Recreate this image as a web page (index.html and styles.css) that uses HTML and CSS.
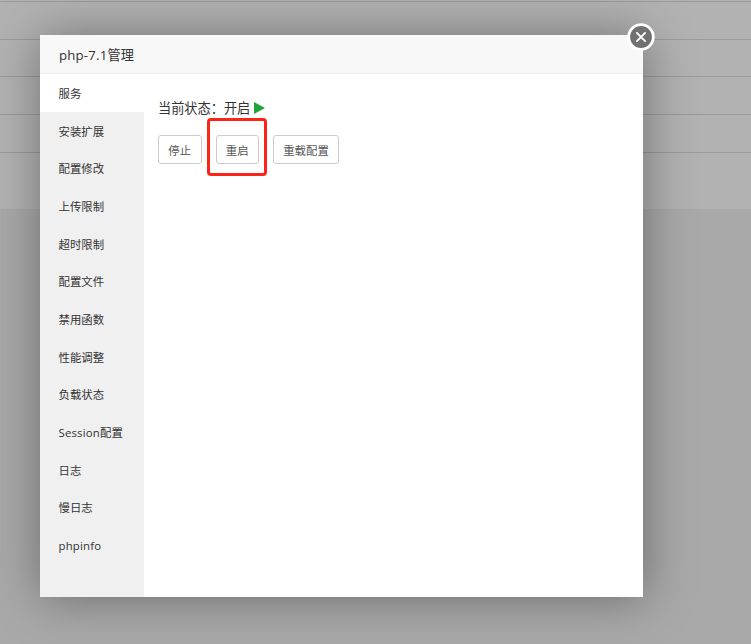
FILE: index.html
```
<!DOCTYPE html>
<html lang="zh-CN">
<head>
<meta charset="utf-8">
<title>php-7.1管理</title>
<link rel="stylesheet" href="styles.css">
</head>
<body>
<div class="backdrop">
  <div class="row row-first"></div>
  <div class="row"></div>
  <div class="row"></div>
  <div class="row"></div>
  <div class="row"></div>
  <div class="row row-last"></div>
</div>
<section class="dialog">
  <header class="dialog-title">php-7.1管理</header>
  <button class="close" aria-label="关闭">
    <svg viewBox="0 0 28 28" width="28" height="28"><circle cx="14" cy="14" r="12.3" fill="#717171" stroke="#fff" stroke-width="2.8"/><path d="M9.9 9.9l8.2 8.2M18.1 9.9l-8.2 8.2" stroke="#fff" stroke-width="1.9" stroke-linecap="round"/></svg>
  </button>
  <div class="dialog-body">
    <nav class="menu">
      <a class="item active">服务</a>
      <a class="item">安装扩展</a>
      <a class="item">配置修改</a>
      <a class="item">上传限制</a>
      <a class="item">超时限制</a>
      <a class="item">配置文件</a>
      <a class="item">禁用函数</a>
      <a class="item">性能调整</a>
      <a class="item">负载状态</a>
      <a class="item latin">Session配置</a>
      <a class="item">日志</a>
      <a class="item">慢日志</a>
      <a class="item latin">phpinfo</a>
    </nav>
    <main class="content">
      <p class="status">当前状态：开启<svg class="play" viewBox="0 0 11 12" width="11" height="12"><path d="M0 0l11 6-11 6z" fill="#20a53a"/></svg></p>
      <div class="actions">
        <button class="btn">停止</button>
        <button class="btn marked">重启</button>
        <button class="btn wide">重载配置</button>
      </div>
    </main>
  </div>
</section>
</body>
</html>
```
FILE: styles.css
```
* { box-sizing: border-box; }
body {
  margin: 0;
  height: 644px;
  overflow: hidden;
  background: #a9a9a9;
  color: #333;
  font-family: "Open Sans", "Noto Sans CJK SC", sans-serif;
  font-size: 11.4px;
}
.backdrop { height: 209px; background: #b2b2b2; }
.row { height: 37.7px; border-bottom: 1px solid #999; }
.row-first { height: 2px; }
.row-last { border-bottom: 0; }
.dialog {
  position: absolute;
  left: 40px;
  top: 35px;
  width: 603px;
  height: 562px;
  display: flex;
  flex-direction: column;
  background: #fff;
  box-shadow: 1px 1px 47px rgba(0, 0, 0, .37);
}
.dialog-title {
  height: 39px;
  padding-left: 19px;
  line-height: 41px;
  font-size: 13.2px;
  letter-spacing: .2px;
  background: #f8f8f8;
  border-bottom: 1px solid #eee;
}
.close {
  position: absolute;
  top: -12.5px;
  right: -12px;
  width: 28px;
  height: 28px;
  padding: 0;
  border: 0;
  background: none;
}
.close svg { display: block; fill: none; }
.dialog-body { flex: 1; display: flex; }
.menu { width: 104px; background: #f0f0f0; }
.item {
  display: block;
  height: 37.68px;
  padding-left: 18.5px;
  line-height: 40px;
  white-space: nowrap;
}
.latin { letter-spacing: .17px; }
.active { background: #fff; }
.content { flex: 1; padding: 23px 0 0 14px; }
.status {
  display: flex;
  align-items: center;
  gap: 4px;
  height: 20px;
  margin: 0;
  font-size: 13.2px;
}
.play { position: relative; top: 1px; }
.actions { display: flex; gap: 14px; margin-top: 18px; }
.btn {
  position: relative;
  width: 43.5px;
  height: 29px;
  padding: 0;
  border: 1px solid #ccc;
  border-radius: 3px;
  background: #fff;
  color: #555;
  font: inherit;
}
.wide { width: 66px; }
.marked::after {
  content: "";
  position: absolute;
  inset: -18px -9px -13px -10px;
  border: 3px solid #fb2416;
  border-radius: 4px;
}
```
